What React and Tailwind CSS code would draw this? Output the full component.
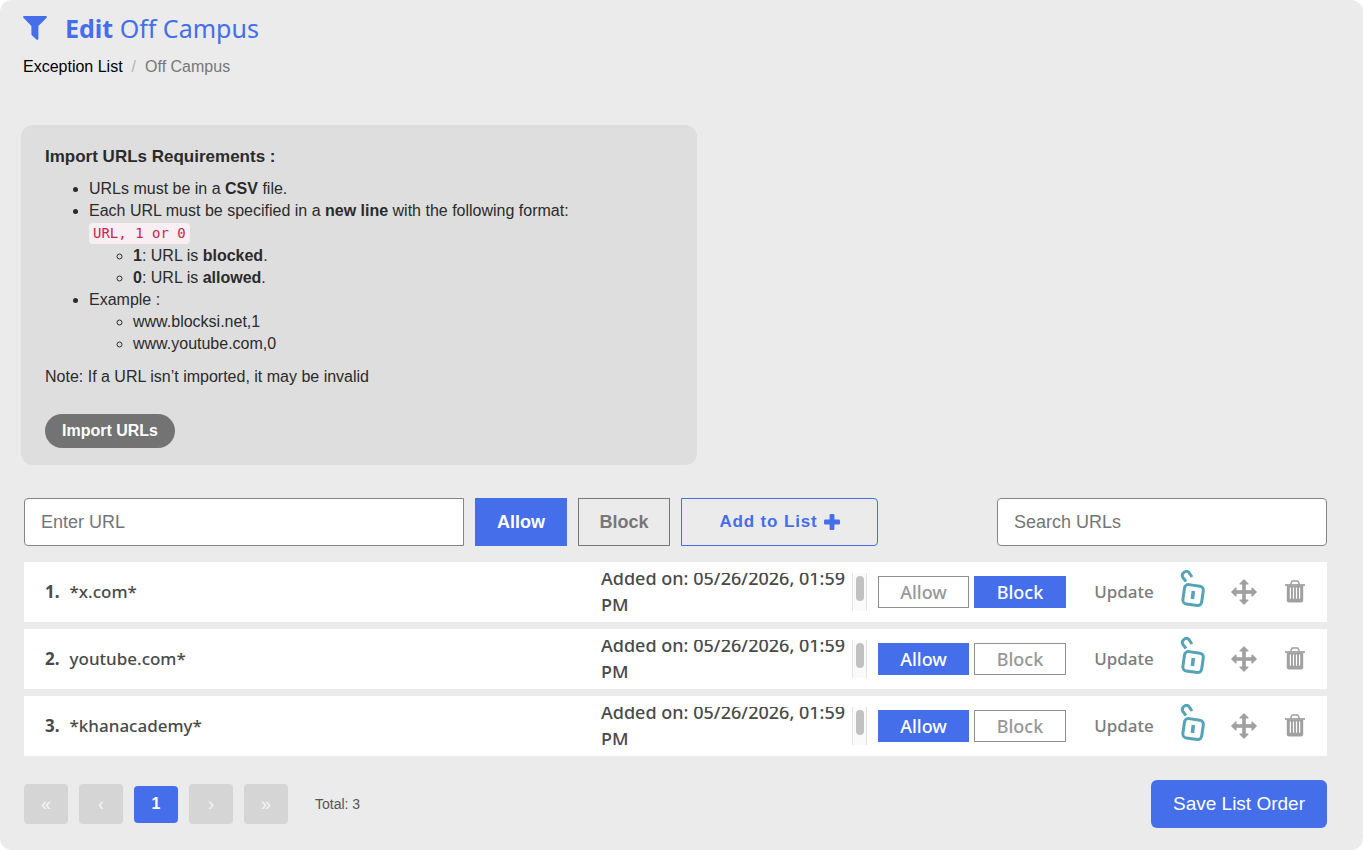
import React, { useState } from "react";

const initialUrls = [
  { id: 1, url: "*x.com*", added: "05/26/2026, 01:59 PM", action: "block" },
  { id: 2, url: "youtube.com*", added: "05/26/2026, 01:59 PM", action: "allow" },
  { id: 3, url: "*khanacademy*", added: "05/26/2026, 01:59 PM", action: "allow" },
];

const FilterIcon = () => (
  <svg viewBox="0 0 24 24" className="w-6 h-6" fill="currentColor">
    <path d="M0.8 0 H23.2 Q24.4 0.6 23.6 1.8 L15.4 10 V22.8 Q15.2 24.2 13.8 23.8 L9 19.4 Q8.4 18.8 8.4 18 V10 L0.4 1.8 Q-0.4 0.6 0.8 0 Z" />
  </svg>
);

const PlusIcon = () => (
  <svg viewBox="0 0 16 16" className="w-4 h-4" fill="currentColor">
    <rect x="0" y="5.6" width="16" height="4.8" rx="1.2" />
    <rect x="5.6" y="0" width="4.8" height="16" rx="1.2" />
  </svg>
);

const UnlockIcon = () => (
  <svg viewBox="0 0 26 38" className="w-[26px] h-[38px]" fill="none" stroke="#56a3b7" strokeWidth="3">
    <path d="M6 11.5 L3 7.6 C0.4 3.6 6.2 -0.8 9 2.6 L12 7" />
    <rect x="3.6" y="15.3" width="19" height="19.5" rx="4" transform="rotate(8 13.1 25)" />
    <path d="M13.4 21 L12.4 29" strokeWidth="3.6" />
  </svg>
);

const MoveIcon = () => (
  <svg
    viewBox="0 0 26 26"
    className="w-[26px] h-[26px]"
    fill="#a0a0a0"
    stroke="#a0a0a0"
    strokeWidth="1.2"
    strokeLinejoin="round"
  >
    <path d="M13 0.8 L17 5 H14.2 V11.8 H21 V9 L25.2 13 L21 17 V14.2 H14.2 V21 H17 L13 25.2 L9 21 H11.8 V14.2 H5 V17 L0.8 13 L5 9 V11.8 H11.8 V5 H9 Z" />
  </svg>
);

const TrashIcon = () => (
  <svg viewBox="0 0 20 23" className="w-5 h-[23px]" fill="none" stroke="#a0a0a0">
    <path d="M5.5 4.5 L7.2 1 H12.8 L14.5 4.5" strokeWidth="1.5" />
    <path d="M0 5 H20" strokeWidth="1.8" />
    <path d="M1.8 6 H18.2 V20.5 Q18.2 22.6 16 22.6 H4 Q1.8 22.6 1.8 20.5 Z" fill="#a0a0a0" stroke="none" />
    <path d="M5.4 7.5 V18.8 M8.5 7.5 V18.8 M11.5 7.5 V18.8 M14.6 7.5 V18.8" stroke="#fff" strokeWidth="1.2" />
  </svg>
);

const UrlRow = ({ item, position, onChange }) => {
  const selected = "bg-[#446eea] border-[#446eea] text-white";
  const unselected = "bg-white border-[#8f8f8f] text-[#979797]";

  return (
    <li className="flex items-center h-[60px] bg-white pl-[21px] pr-[22px] text-lg text-[#4a4a4a]">
      <div className="flex flex-1 gap-[10px] text-[17px] font-medium">
        <span className="font-bold">{position}.</span>
        <span>{item.url}</span>
      </div>
      <div className="flex items-center w-[266px] h-[38px] overflow-hidden">
        <p className="flex-1 font-medium leading-[27px]">Added on: {item.added}</p>
        <div className="w-[15px] h-full border-x border-[#e4e4e4] bg-[#fafafa] pt-[3px]">
          <div className="w-2 h-[25px] mx-auto rounded-full bg-[#c1c1c1]" />
        </div>
      </div>
      <div className="flex gap-[5px] ml-[11px] font-medium">
        <button
          type="button"
          onClick={() => onChange("allow")}
          className={`w-[91px] h-8 border leading-none ${item.action === "allow" ? selected : unselected}`}
        >
          Allow
        </button>
        <button
          type="button"
          onClick={() => onChange("block")}
          className={`w-[92px] h-8 border leading-none ${item.action === "block" ? selected : unselected}`}
        >
          Block
        </button>
      </div>
      <button type="button" className="w-[60px] ml-7 text-[17px] font-medium text-[#7c7c7c]">
        Update
      </button>
      <button type="button" aria-label="Unlock" className="ml-[26px] mb-[6px]">
        <UnlockIcon />
      </button>
      <button type="button" aria-label="Move" className="ml-[25px]">
        <MoveIcon />
      </button>
      <button type="button" aria-label="Delete" className="ml-7 mb-[2px]">
        <TrashIcon />
      </button>
    </li>
  );
};

const ExceptionList = () => {
  const [urls, setUrls] = useState(initialUrls);
  const [newUrl, setNewUrl] = useState("");
  const [newAction, setNewAction] = useState("allow");
  const [search, setSearch] = useState("");

  const handleAdd = () => {
    if (!newUrl) return;
    setUrls([
      ...urls,
      { id: Date.now(), url: newUrl, added: new Date().toLocaleString("en-US"), action: newAction },
    ]);
    setNewUrl("");
  };

  const handleActionChange = (id, action) => {
    setUrls(urls.map((item) => (item.id === id ? { ...item, action } : item)));
  };

  const visibleUrls = urls.filter((item) => item.url.includes(search));
  const pageButton = "w-11 h-10 rounded bg-[#d5d5d5] text-[#f5f5f5] text-lg leading-none";

  return (
    <div className="min-h-screen rounded-xl bg-[#ebebeb] pl-6 pr-9 pt-3 pb-[22px] font-['Liberation_Sans',Arial,sans-serif] text-[#2b2b2b]">
      <header>
        <h1 className="flex items-center gap-[18px] -ml-px font-['Noto_Sans',sans-serif] text-[25px] leading-8 text-[#446eea]">
          <FilterIcon />
          <span>
            <strong>Edit</strong> Off Campus
          </span>
        </h1>
        <nav className="flex gap-[9px] -ml-px mt-[11px] text-base leading-6">
          <a href="#exceptions" className="text-black">
            Exception List
          </a>
          <span className="text-[#b5b5b5]">/</span>
          <span className="text-[#777]">Off Campus</span>
        </nav>
      </header>

      <section className="max-w-[676px] -ml-[3px] mt-[46px] px-6 pt-5 pb-[17px] rounded-xl bg-[#dedede] text-base leading-[22px]">
        <h2 className="text-[17px] leading-6 font-bold mb-[9px]">Import URLs Requirements :</h2>
        <ul className="list-disc pl-11">
          <li>
            URLs must be in a <strong>CSV</strong> file.
          </li>
          <li>
            Each URL must be specified in a <strong>new line</strong> with the following format:
            <br />
            <code className="inline-block mb-px px-1 rounded bg-[#f9eff2] font-['DejaVu_Sans_Mono',monospace] text-sm leading-[21px] text-[#c7254e]">
              URL, 1 or 0
            </code>
            <ul className="list-[circle] pl-11">
              <li>
                <strong>1</strong>: URL is <strong>blocked</strong>.
              </li>
              <li>
                <strong>0</strong>: URL is <strong>allowed</strong>.
              </li>
            </ul>
          </li>
          <li>
            Example :
            <ul className="list-[circle] pl-11">
              <li>www.blocksi.net,1</li>
              <li>www.youtube.com,0</li>
            </ul>
          </li>
        </ul>
        <p className="mt-[11px]">Note: If a URL isn’t imported, it may be invalid</p>
        <button type="button" className="h-[34px] mt-[26px] px-[17px] rounded-full bg-[#737373] text-white font-bold">
          Import URLs
        </button>
      </section>

      <div className="flex items-center gap-[11px] mt-[33px] h-12 text-lg">
        <input
          type="text"
          aria-label="Enter URL"
          placeholder="Enter URL"
          value={newUrl}
          onChange={(e) => setNewUrl(e.target.value)}
          className="w-[440px] h-12 px-4 rounded-l border border-[#858585] bg-white placeholder:text-[#757575]"
        />
        <button
          type="button"
          onClick={() => setNewAction("allow")}
          className={`w-[92px] h-12 border font-bold ${
            newAction === "allow" ? "bg-[#446eea] border-[#446eea] text-white" : "border-[#777] text-[#777]"
          }`}
        >
          Allow
        </button>
        <button
          type="button"
          onClick={() => setNewAction("block")}
          className={`w-[92px] h-12 border font-bold ${
            newAction === "block" ? "bg-[#446eea] border-[#446eea] text-white" : "border-[#777] text-[#777]"
          }`}
        >
          Block
        </button>
        <button
          type="button"
          onClick={handleAdd}
          className="flex items-center justify-center gap-[6px] w-[197px] h-12 rounded-r border border-[#446eea] text-[17px] font-bold tracking-wider text-[#446eea]"
        >
          Add to List <PlusIcon />
        </button>
        <input
          type="search"
          aria-label="Search URLs"
          placeholder="Search URLs"
          value={search}
          onChange={(e) => setSearch(e.target.value)}
          className="w-[330px] h-12 ml-auto px-4 rounded border border-[#858585] bg-white placeholder:text-[#757575]"
        />
      </div>

      <ol className="flex flex-col gap-[7px] mt-4 font-['Noto_Sans',sans-serif]">
        {visibleUrls.map((item, index) => (
          <UrlRow
            key={item.id}
            item={item}
            position={index + 1}
            onChange={(action) => handleActionChange(item.id, action)}
          />
        ))}
      </ol>

      <footer className="flex items-center justify-between mt-6">
        <div className="flex items-center gap-[11px]">
          <button type="button" className={pageButton}>«</button>
          <button type="button" className={pageButton}>‹</button>
          <button type="button" className="w-11 h-[37px] rounded bg-[#446eea] text-white text-base font-bold">
            1
          </button>
          <button type="button" className={pageButton}>›</button>
          <button type="button" className={pageButton}>»</button>
          <span className="ml-4 text-sm text-[#555]">Total: {urls.length}</span>
        </div>
        <button type="button" className="h-12 px-[22px] rounded-md bg-[#446eea] text-white text-[19px]">
          Save List Order
        </button>
      </footer>
    </div>
  );
};

export default ExceptionList;
